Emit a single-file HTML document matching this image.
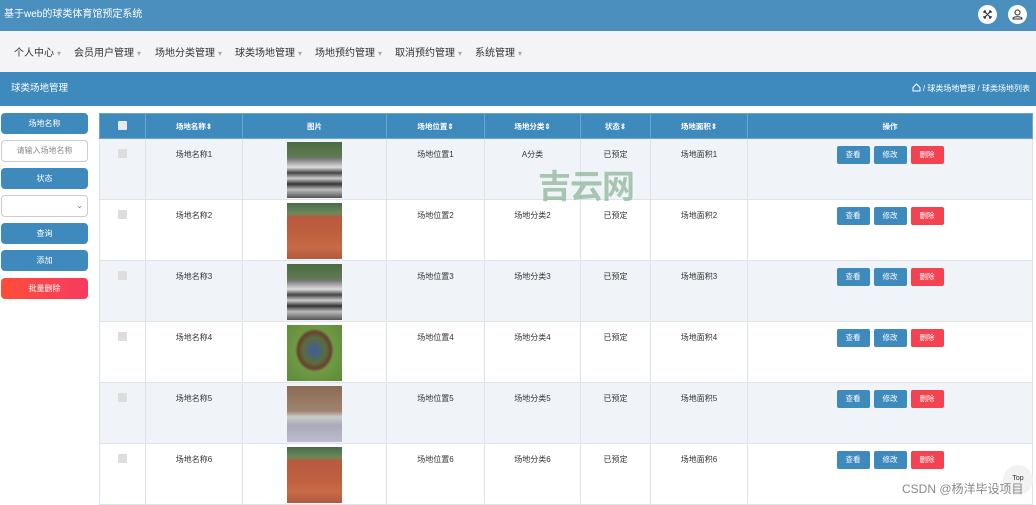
<!DOCTYPE html>
<html><head><meta charset="utf-8">
<style>
*{margin:0;padding:0;box-sizing:border-box}
body{width:1036px;height:500px;overflow:hidden;background:#fff;font-family:"Liberation Sans","Noto Sans CJK SC",sans-serif;position:relative}
.a{position:absolute}
.top{left:0;top:0;width:1036px;height:31px;background:#4a8fbd;color:#fff;font-size:10px;line-height:29px;padding-left:4px}
.ic{top:5px;width:19px;height:19px;border-radius:50%;background:#fff}
.nav{left:0;top:31px;width:1036px;height:41px;background:#f4f4f6;font-size:10px;color:#333}
.nav span{position:absolute;top:13px}
.nav span i{font-style:normal;color:#aaa;font-size:8px;margin-left:3px}
.bar{left:0;top:72px;width:1036px;height:34px;background:#3f8abc;color:#fff;font-size:9.5px;line-height:34px;padding-left:11px}
.bc{right:6px;top:0;font-size:8px}
.sb{left:1px;width:87px;height:21px;border-radius:4px;background:#3f8abc;color:#fff;font-size:8px;text-align:center;line-height:21px}
.inp{left:1px;width:87px;height:22px;border:1px solid #ccc;border-radius:4px;background:#fff;font-size:8px;color:#888;text-align:center;line-height:20px}
table{position:absolute;left:99px;top:113px;border-collapse:collapse;font-size:8px;color:#333}
th{background:#3f8abc;color:#fff;height:25px;font-weight:bold;border:1px solid #6aa6cd;font-size:7.5px}
td{height:61px;border:1px solid #dde3ea;text-align:center;vertical-align:top;padding-top:10px}
tr.s td{background:#f0f4f8}
.cb{display:inline-block;width:9px;height:9px;background:#ddd;border-radius:1px}
.img{display:block;width:55px;height:56px;margin:-7px auto -30px}
.b{display:inline-block;width:33px;height:18px;line-height:18px;color:#fff;font-size:7.5px;border-radius:2px;margin:-3px 2px 0 2px}
.v{background:#3f8abc}.r{background:#f44350}
.p1{background:linear-gradient(#4d6b43 0,#5d7a52 25%,#777 30%,#ddd 45%,#444 55%,#ccc 65%,#333 75%,#bbb 85%,#555 100%)}
.p2{background:linear-gradient(#4a6a4a 0,#6a8a5a 18%,#b85a40 25%,#c0603f 60%,#c86a48 80%,#b05a3f 100%)}
.p3{background:radial-gradient(ellipse at 50% 45%,#3d5ca0 0,#5a6d3a 30%,#6a4030 42%,#6e9a44 50%,#5e8a3a 100%)}
.p4{background:linear-gradient(#8a6a55 0,#a08470 45%,#ccc 55%,#aab 70%,#bbc 100%)}
</style></head><body>
<div class="a top">基于web的球类体育馆预定系统</div>
<div class="a ic" style="left:978px"><svg width="19" height="19" viewBox="0 0 19 19"><path d="M6 6l7 7M13 6l-7 7M6 6h2M6 6v2M13 6h-2M13 6v2M6 13h2M6 13v-2M13 13h-2M13 13v-2" stroke="#333" stroke-width="1.2" fill="none"/></svg></div>
<div class="a ic" style="left:1008px"><svg width="19" height="19" viewBox="0 0 19 19"><circle cx="9.5" cy="7.5" r="2.5" stroke="#333" fill="none" stroke-width="1.1"/><path d="M5 14c0-3 9-3 9 0z" stroke="#333" fill="none" stroke-width="1.1"/></svg></div>
<div class="a nav">
<span style="left:14px">个人中心<i>▾</i></span>
<span style="left:74px">会员用户管理<i>▾</i></span>
<span style="left:155px">场地分类管理<i>▾</i></span>
<span style="left:235px">球类场地管理<i>▾</i></span>
<span style="left:315px">场地预约管理<i>▾</i></span>
<span style="left:395px">取消预约管理<i>▾</i></span>
<span style="left:475px">系统管理<i>▾</i></span>
</div>
<div class="a bar">球类场地管理<div class="a bc"><svg width="9" height="9" viewBox="0 0 9 9" style="vertical-align:-1px"><path d="M1 4.5L4.5 1 8 4.5V8H1z" stroke="#fff" fill="none"/></svg> / 球类场地管理 / 球类场地列表</div></div>
<div class="a sb" style="top:113px">场地名称</div>
<div class="a inp" style="top:140px">请输入场地名称</div>
<div class="a sb" style="top:168px">状态</div>
<div class="a inp" style="top:195px;text-align:right;padding-right:4px;color:#3f8abc">⌄</div>
<div class="a sb" style="top:223px">查询</div>
<div class="a sb" style="top:250px">添加</div>
<div class="a sb" style="top:278px;background:linear-gradient(90deg,#ff4d3a,#f73a5e)">批量删除</div>
<table>
<tr><th style="width:46px"><span class="cb" style="background:#e8e8e8"></span></th><th style="width:97px">场地名称⇕</th><th style="width:144px">图片</th><th style="width:98px">场地位置⇕</th><th style="width:96px">场地分类⇕</th><th style="width:70px">状态⇕</th><th style="width:97px">场地面积⇕</th><th style="width:285px">操作</th></tr>
<tr class="s"><td><span class="cb"></span></td><td>场地名称1</td><td><span class="img p1"></span></td><td>场地位置1</td><td>A分类</td><td>已预定</td><td>场地面积1</td><td><span class="b v">查看</span><span class="b v">修改</span><span class="b r">删除</span></td></tr>
<tr><td><span class="cb"></span></td><td>场地名称2</td><td><span class="img p2"></span></td><td>场地位置2</td><td>场地分类2</td><td>已预定</td><td>场地面积2</td><td><span class="b v">查看</span><span class="b v">修改</span><span class="b r">删除</span></td></tr>
<tr class="s"><td><span class="cb"></span></td><td>场地名称3</td><td><span class="img p1"></span></td><td>场地位置3</td><td>场地分类3</td><td>已预定</td><td>场地面积3</td><td><span class="b v">查看</span><span class="b v">修改</span><span class="b r">删除</span></td></tr>
<tr><td><span class="cb"></span></td><td>场地名称4</td><td><span class="img p3"></span></td><td>场地位置4</td><td>场地分类4</td><td>已预定</td><td>场地面积4</td><td><span class="b v">查看</span><span class="b v">修改</span><span class="b r">删除</span></td></tr>
<tr class="s"><td><span class="cb"></span></td><td>场地名称5</td><td><span class="img p4"></span></td><td>场地位置5</td><td>场地分类5</td><td>已预定</td><td>场地面积5</td><td><span class="b v">查看</span><span class="b v">修改</span><span class="b r">删除</span></td></tr>
<tr><td><span class="cb"></span></td><td>场地名称6</td><td><span class="img p2"></span></td><td>场地位置6</td><td>场地分类6</td><td>已预定</td><td>场地面积6</td><td><span class="b v">查看</span><span class="b v">修改</span><span class="b r">删除</span></td></tr>
</table>
<div class="a" style="left:538px;top:164px;font-size:33px;color:rgba(120,165,130,0.6);font-weight:bold;letter-spacing:-1px;font-family:'Noto Sans CJK SC',sans-serif;line-height:40px">吉云网</div>
<div class="a" style="left:1003px;top:465px;width:30px;height:30px;border-radius:50%;background:#f2f2f2;font-size:7px;text-align:center;line-height:28px;color:#333">Top</div>
<div class="a" style="left:902px;top:480px;font-size:12px;color:#888;font-family:'Liberation Sans','Noto Sans CJK SC',sans-serif">CSDN @杨洋毕设项目</div>
</body></html>
